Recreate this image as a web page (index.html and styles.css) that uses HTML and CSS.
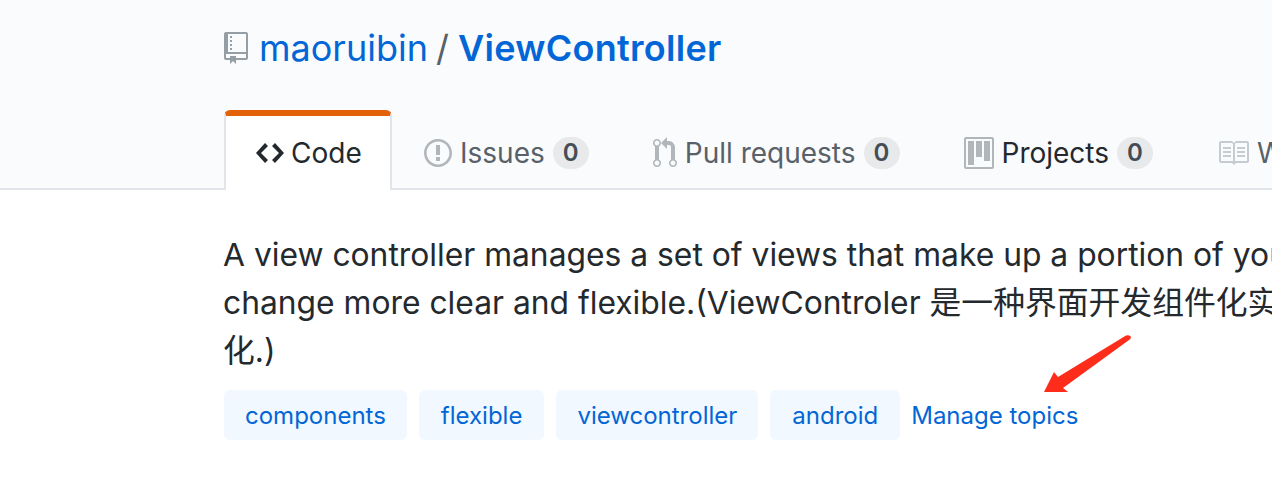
FILE: index.html
```html
<!DOCTYPE html>
<html lang="en">
  <head>
    <meta charset="UTF-8" />
    <meta name="viewport" content="width=device-width, initial-scale=1.0" />
    <title>maoruibin / ViewController</title>
    <link rel="stylesheet" href="styles.css">
  </head>
  <body>
    <div class="repohead">
      <h1 class="repo-title">
        <svg class="icon icon-repo" viewBox="0 0 12 16"><path d="M4 9H3V8h1v1zm0-3H3v1h1V6zm0-2H3v1h1V4zm0-2H3v1h1V2zm8-1v12c0 .55-.45 1-1 1H6v2l-1.5-1.5L3 16v-2H1c-.55 0-1-.45-1-1V1c0-.55.45-1 1-1h10c.55 0 1 .45 1 1zm-1 10H1v2h2v-1h3v1h5v-2zm0-10H2v9h9V1z"/></svg>
        <a class="owner" href="#">maoruibin</a>
        <span class="sep">/</span>
        <a class="name" href="#">ViewController</a>
      </h1>

      <nav class="tabs">
        <a class="tab selected" href="#">
          <svg class="icon icon-code" viewBox="0 0 14 16"><path d="M9.5 3L8 4.5 11.5 8 8 11.5 9.5 13 14 8 9.5 3zm-5 0L0 8l4.5 5L6 11.5 2.5 8 6 4.5 4.5 3z"/></svg>
          Code
        </a>
        <a class="tab" href="#">
          <svg class="icon icon-issue" viewBox="0 0 14 16"><path d="M7 2.3c3.14 0 5.7 2.56 5.7 5.7s-2.56 5.7-5.7 5.7A5.71 5.71 0 0 1 1.3 8c0-3.14 2.56-5.7 5.7-5.7zM7 1C3.14 1 0 4.14 0 8s3.14 7 7 7 7-3.14 7-7-3.14-7-7-7zm1 3H6v5h2V4zm0 6H6v2h2v-2z"/></svg>
          Issues <span class="counter">0</span>
        </a>
        <a class="tab" href="#">
          <svg class="icon icon-pull" viewBox="0 0 12 16"><path d="M11 11.28V5c-.03-.78-.34-1.47-.94-2.06C9.46 2.35 8.78 2.03 8 2H7V0L4 3l3 3V4h1c.27.02.48.11.69.31.21.2.3.42.31.69v6.28A1.993 1.993 0 0 0 10 15a1.993 1.993 0 0 0 1-3.72zm-1 2.92c-.66 0-1.2-.55-1.2-1.2 0-.65.55-1.2 1.2-1.2.65 0 1.2.55 1.2 1.2 0 .65-.55 1.2-1.2 1.2zM4 3c0-1.11-.89-2-2-2a1.993 1.993 0 0 0-1 3.72v6.56A1.993 1.993 0 0 0 2 15a1.993 1.993 0 0 0 1-3.72V4.72c.59-.34 1-.98 1-1.72zm-.8 10c0 .66-.55 1.2-1.2 1.2-.65 0-1.2-.55-1.2-1.2 0-.65.55-1.2 1.2-1.2.65 0 1.2.55 1.2 1.2zM2 4.2C1.34 4.2.8 3.65.8 3c0-.65.55-1.2 1.2-1.2.65 0 1.2.55 1.2 1.2 0 .65-.55 1.2-1.2 1.2z"/></svg>
          Pull requests <span class="counter">0</span>
        </a>
        <a class="tab dark" href="#">
          <svg class="icon icon-project" viewBox="0 0 15 16"><path fill-rule="evenodd" d="M10 12h3V2h-3v10zm-4-2h3V2H6v8zm-4 4h3V2H2v12zm-1 1h13V1H1v14zM14 0H1a1 1 0 0 0-1 1v14a1 1 0 0 0 1 1h13a1 1 0 0 0 1-1V1a1 1 0 0 0-1-1z"/></svg>
          Projects <span class="counter">0</span>
        </a>
        <a class="tab" href="#">
          <svg class="icon icon-book" viewBox="0 0 16 16"><path d="M3 5h4v1H3V5zm0 3h4V7H3v1zm0 2h4V9H3v1zm11-5h-4v1h4V5zm0 2h-4v1h4V7zm0 2h-4v1h4V9zm2-6v9c0 .55-.45 1-1 1H9.5l-1 1-1-1H2c-.55 0-1-.45-1-1V3c0-.55.45-1 1-1h5.5l1 1 1-1H15c.55 0 1 .45 1 1zm-8 .5L7.5 3H2v9h6V3.5zm7-.5H9.5l-.5.5V12h6V3z"/></svg>
          Wiki
        </a>
      </nav>
    </div>

    <div class="content">
      <p class="description">
        <span class="line">A view controller manages a set of views that make up a portion of your app's user interface.</span>
        <span class="line">change more clear and flexible.(ViewControler 是一种界面开发组件化实现方式,让界面变更更加清晰灵活</span>
        <span class="line">化.)</span>
      </p>
      <div class="topics">
        <a class="topic" href="#">components</a>
        <a class="topic wide" href="#">flexible</a>
        <a class="topic" href="#">viewcontroller</a>
        <a class="topic wide" href="#">android</a>
        <a class="manage" href="#">Manage topics</a>
      </div>
    </div>

    <!-- red annotation arrow drawn on top of the screenshot -->
    <svg class="arrow" viewBox="0 0 100 70"><path d="M4 58L14 38 18 43 86 1.500Q90 .5 91 3 91 5 89 6L23 54 28 58Z"/></svg>
  </body>
</html>
```

FILE: styles.css
```css
* {
  box-sizing: border-box;
}

html,
body {
  height: 100%;
}

body {
  margin: 0;
  overflow: hidden;
  position: relative;
  font-family: Inter, "Noto Sans CJK SC", sans-serif;
  color: #24292e;
  background-color: #fff;
}

a {
  text-decoration: none;
}

.icon {
  flex: none;
  fill: #b1b6bb;
}

/* Repo header */
.repohead {
  height: 190px;
  padding-left: 224px;
  background-color: #fafbfc;
  border-bottom: 2px solid #e1e4e8;
}

.repo-title {
  display: flex;
  align-items: center;
  height: 96px;
  margin: 0 0 14px;
  font-size: 36px;
  font-weight: 400;
  white-space: nowrap;
}

.icon-repo {
  width: 24px;
  height: 32px;
  margin-right: 11px;
  fill: #959da5;
}

.owner,
.name {
  color: #0366d6;
}

.sep {
  margin: 0 9px 0 8px;
  color: #586069;
}

.name {
  font-weight: 600;
  letter-spacing: 0.3px;
}

/* Tabs */
.tabs {
  display: flex;
  height: 80px;
  white-space: nowrap;
}

.tab {
  display: flex;
  flex: none;
  align-items: center;
  gap: 8px;
  height: 80px;
  padding: 5px 32px 0;
  font-size: 28px;
  color: #586069;
}

.tab.dark {
  color: #24292e;
}

.tab.selected {
  width: 168px;
  padding: 0 0 0 30px;
  gap: 7px;
  color: #24292e;
  background-color: #fff;
  border: 2px solid #e1e4e8;
  border-top: 6px solid #e36209;
  border-bottom: 0;
  border-radius: 6px 6px 0 0;
}

.icon-code {
  width: 28px;
  height: 32px;
  fill: #24292e;
}

.icon-issue {
  width: 28px;
  height: 32px;
}

.icon-pull {
  width: 24px;
  height: 32px;
}

.icon-project {
  width: 30px;
  height: 32px;
}

.icon-book {
  width: 32px;
  height: 32px;
  fill: #c6cbd1;
}

.counter {
  min-width: 36px;
  padding: 3px 10px;
  font-size: 24px;
  font-weight: 600;
  line-height: 26px;
  text-align: center;
  color: #444d56;
  background-color: rgba(27, 31, 35, 0.08);
  border-radius: 20px;
}

/* Description and topics */
.content {
  padding: 41px 0 0 224px;
}

.description {
  margin: 0 0 0 -1px;
  font-size: 31.8px;
  line-height: 48px;
  white-space: nowrap;
}

.line {
  display: block;
}

.topics {
  display: flex;
  align-items: center;
  gap: 12px;
  margin-top: 15px;
  white-space: nowrap;
}

.topic {
  height: 50px;
  padding: 0 21px;
  font-size: 24px;
  line-height: 51px;
  color: #0366d6;
  background-color: #f1f8ff;
  border-radius: 6px;
}

.topic.wide {
  padding: 0 22px;
}

.manage {
  margin-left: -1px;
  font-size: 24px;
  color: #0366d6;
}

.arrow {
  position: absolute;
  left: 1040px;
  top: 334px;
  width: 100px;
  height: 70px;
  fill: #fe2c1a;
}
```
